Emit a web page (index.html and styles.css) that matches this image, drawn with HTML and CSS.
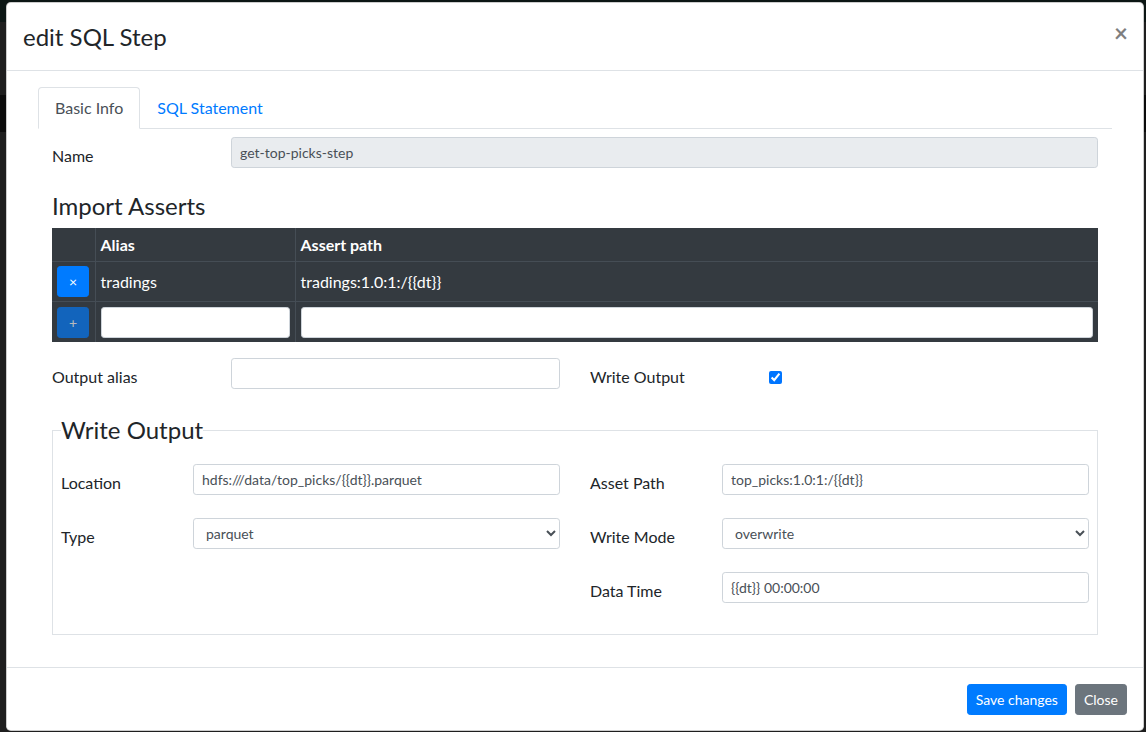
FILE: index.html
```html
<!DOCTYPE html>
<html lang="en">
<head>
<meta charset="utf-8">
<title>edit SQL Step</title>
<link rel="stylesheet" href="styles.css">
</head>
<body>
<div class="modal">
  <div class="modal-header">
    <h4 class="modal-title">edit SQL Step</h4>
    <button class="close" type="button" aria-label="Close">×</button>
  </div>
  <div class="modal-body">
    <div class="container">
      <ul class="nav-tabs">
        <li class="nav-link active">Basic Info</li>
        <li class="nav-link">SQL Statement</li>
      </ul>
      <div class="tab-content">
        <div class="form-row name-row">
          <label class="col-label">Name</label>
          <div class="field"><input class="form-control readonly" type="text" value="get-top-picks-step" readonly></div>
        </div>

        <h4 class="section-title">Import Asserts</h4>
        <table class="assert-table">
          <colgroup><col class="c1"><col class="c2"><col></colgroup>
          <thead>
            <tr><th></th><th>Alias</th><th>Assert path</th></tr>
          </thead>
          <tbody>
            <tr>
              <td><button class="btn btn-primary btn-icon" type="button">×</button></td>
              <td>tradings</td>
              <td>tradings:1.0:1:/{{dt}}</td>
            </tr>
            <tr>
              <td><button class="btn btn-primary btn-icon disabled" type="button">+</button></td>
              <td><input class="form-control" type="text"></td>
              <td><input class="form-control" type="text"></td>
            </tr>
          </tbody>
        </table>

        <div class="halves">
          <div class="form-row">
            <label class="col-label">Output alias</label>
            <div class="field"><input class="form-control" type="text"></div>
          </div>
          <div class="form-row">
            <label class="col-label">Write Output</label>
            <div class="field check-field"><input class="check" type="checkbox" checked></div>
          </div>
        </div>

        <fieldset class="output-set">
          <legend>Write Output</legend>
          <div class="halves inner">
            <div class="col">
              <div class="form-row narrow">
                <label class="col-label">Location</label>
                <div class="field"><input class="form-control" type="text" value="hdfs:///data/top_picks/{{dt}}.parquet"></div>
              </div>
              <div class="form-row narrow">
                <label class="col-label">Type</label>
                <div class="field"><select class="form-control"><option>parquet</option></select></div>
              </div>
            </div>
            <div class="col">
              <div class="form-row narrow">
                <label class="col-label">Asset Path</label>
                <div class="field"><input class="form-control" type="text" value="top_picks:1.0:1:/{{dt}}"></div>
              </div>
              <div class="form-row narrow">
                <label class="col-label">Write Mode</label>
                <div class="field"><select class="form-control"><option>overwrite</option></select></div>
              </div>
              <div class="form-row narrow">
                <label class="col-label">Data Time</label>
                <div class="field"><input class="form-control" type="text" value="{{dt}} 00:00:00"></div>
              </div>
            </div>
          </div>
        </fieldset>
      </div>
    </div>
  </div>
  <div class="modal-footer">
    <button class="btn btn-primary" type="button">Save changes</button>
    <button class="btn btn-secondary" type="button">Close</button>
  </div>
</div>
</body>
</html>
```

FILE: styles.css
```css
* { box-sizing: border-box; }

html, body {
  margin: 0;
  height: 100%;
}

body {
  font-family: "Lato", "Noto Sans", "DejaVu Sans", sans-serif;
  font-size: 16px;
  line-height: 1.5;
  color: #212529;
  background:
    linear-gradient(to bottom,
      #0c1614 0, #0c1614 22px,
      #1e1e1e 22px, #1e1e1e 95px,
      #0b0b0b 95px, #0b0b0b 132px,
      #1e1e1e 132px, #1e1e1e 100%);
  overflow: hidden;
  padding: 2px 2px 0 6px;
}

.modal {
  width: 1138px;
  background: #fff;
  border: 1px solid rgba(0, 0, 0, .2);
  border-radius: 4.8px;
}

.modal-header {
  display: flex;
  align-items: flex-start;
  justify-content: space-between;
  padding: 16px;
  border-bottom: 1px solid #dee2e6;
}

.modal-title {
  margin: 0;
  font-size: 24px;
  font-weight: 400;
  line-height: 35px;
}

.close {
  margin: -14px -17px -16px auto;
  padding: 16px;
  border: 0;
  background: transparent;
  font-family: inherit;
  font-size: 24px;
  font-weight: 700;
  line-height: 1;
  color: #000;
  opacity: .5;
}

.modal-body {
  padding: 16px;
}

.container {
  padding: 0 15px;
}

.nav-tabs {
  display: flex;
  margin: 0;
  padding: 0;
  list-style: none;
  border-bottom: 1px solid #dee2e6;
}

.nav-link {
  padding: 8px 16px;
  margin-bottom: -1px;
  border: 1px solid transparent;
  border-top-left-radius: 4px;
  border-top-right-radius: 4px;
  color: #007bff;
}

.nav-link.active {
  color: #495057;
  background: #fff;
  border-color: #dee2e6 #dee2e6 #fff;
}

.tab-content {
  padding: 8px 14px 0;
}

.form-row {
  display: grid;
  grid-template-columns: 164px 1fr;
  column-gap: 15px;
  align-items: start;
  margin-bottom: 16px;
}

.form-row.narrow {
  grid-template-columns: 117px 1fr;
}

.col-label {
  padding: 7px 0;
  line-height: 24px;
  font-size: 16px;
}

.form-control {
  display: block;
  width: 100%;
  height: 31px;
  padding: 4px 8px;
  font-family: inherit;
  font-size: 14px;
  line-height: 1.5;
  color: #495057;
  background: #fff;
  border: 1px solid #ced4da;
  border-radius: 3.2px;
}

.form-control.readonly {
  background: #e9ecef;
}

select.form-control {
  padding: 4px 8px;
}

.section-title {
  margin: 0 0 8px;
  font-size: 24px;
  font-weight: 400;
  line-height: 29px;
}

.assert-table {
  width: 100%;
  table-layout: fixed;
  border-collapse: collapse;
  border-style: hidden;
  background: #343a40;
  color: #fff;
  margin-bottom: 16px;
}

.assert-table col.c1 { width: 43px; }
.assert-table col.c2 { width: 200px; }

.assert-table th,
.assert-table td {
  border: 1px solid #454d55;
  text-align: left;
  vertical-align: middle;
}

.assert-table th {
  padding: 4.5px 5px;
  font-weight: 700;
}

.assert-table td {
  padding: 4px 5px;
}

.assert-table tbody tr:last-child td {
  padding: 4.5px 5px 4.5px;
}

.btn {
  display: inline-block;
  height: 31px;
  padding: 4px 8px;
  font-family: inherit;
  font-size: 14px;
  line-height: 1.5;
  border: 1px solid transparent;
  border-radius: 3.2px;
  color: #fff;
}

.btn-primary {
  background: #007bff;
  border-color: #007bff;
}

.btn-secondary {
  background: #6c757d;
  border-color: #6c757d;
}

.btn-icon {
  width: 32px;
  padding: 4px 0;
  vertical-align: middle;
}

.btn.disabled {
  opacity: .65;
}

.halves {
  display: grid;
  grid-template-columns: 1fr 1fr;
  column-gap: 30px;
}

.check-field {
  padding-top: 13px;
}

.check {
  display: block;
  width: 13px;
  height: 13px;
  margin: 0;
  accent-color: #0075ff;
}

.output-set {
  margin: 0 0 16px;
  padding: 16px 8px 8px;
  border: 1px solid #dee2e6;
  min-width: 0;
}

.output-set legend {
  padding: 0;
  font-size: 24px;
  line-height: 36px;
}

.modal-footer {
  display: flex;
  justify-content: flex-end;
  align-items: center;
  padding: 12px 12px 11px;
  border-top: 1px solid #dee2e6;
}

.modal-footer .btn {
  margin: 4px;
}
```
